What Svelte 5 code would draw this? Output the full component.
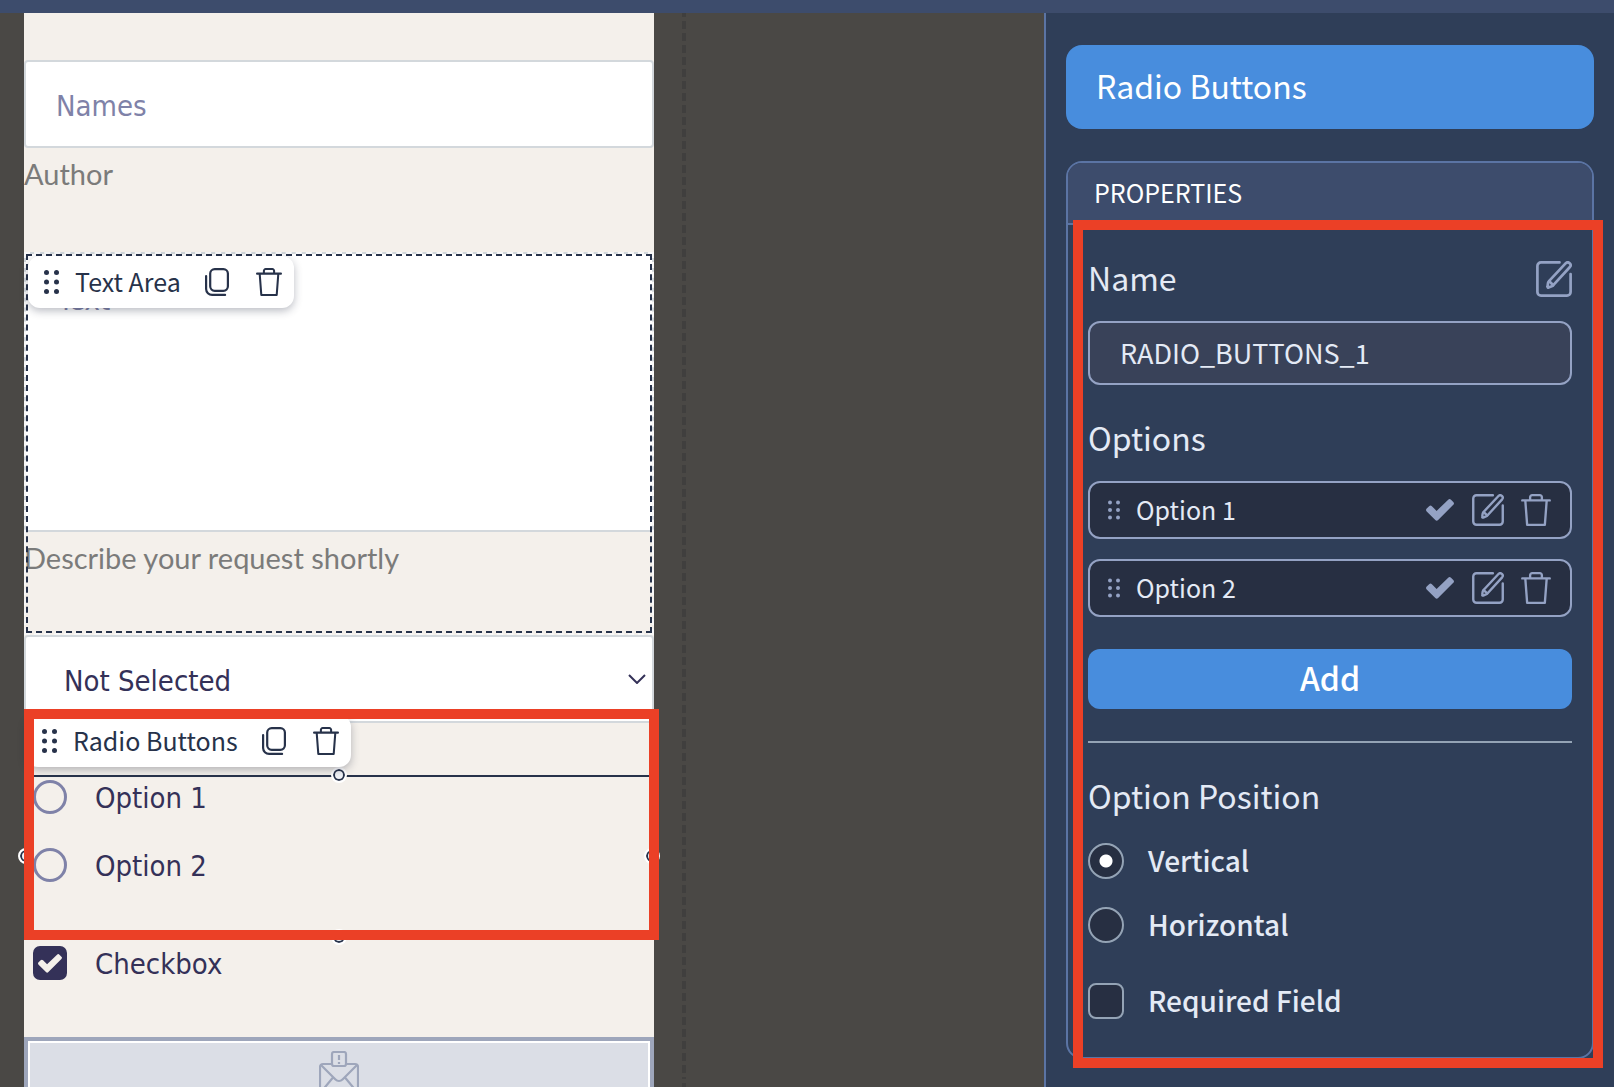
<script>
  let fieldName = $state("RADIO_BUTTONS_1");
  let options = $state([
    { id: 1, label: "Option 1" },
    { id: 2, label: "Option 2" },
  ]);
  let position = $state("vertical");
  let required = $state(false);
  let picked = $state(null);
  let checked = $state(true);

  function addOption() {
    const id = options.length ? options[options.length - 1].id + 1 : 1;
    options.push({ id, label: `Option ${id}` });
  }

  function removeOption(id) {
    options = options.filter((option) => option.id !== id);
  }
</script>

{#snippet dots(size)}
  <svg class="dots {size}" viewBox="0 0 15 24" fill="currentColor" aria-hidden="true">
    {#each [2.5, 12, 21.5] as cy}
      <circle cx="2.5" {cy} r="2.5" />
      <circle cx="12.5" {cy} r="2.5" />
    {/each}
  </svg>
{/snippet}

{#snippet copyIcon()}
  <svg class="icon-copy" viewBox="0 0 24 28" fill="none" stroke="currentColor" stroke-width="2.2" stroke-linecap="round" aria-hidden="true">
    <rect x="5.200" y="1.100" width="17.700" height="21.700" rx="4.500" />
    <path d="M1.100 8v13a6 6 0 0 0 6 5.900h13" />
  </svg>
{/snippet}

{#snippet trashIcon(size)}
  <svg class="trash {size}" viewBox="0 0 28 30" fill="none" stroke="currentColor" stroke-width="2.2" stroke-linecap="round" stroke-linejoin="round" aria-hidden="true">
    <path d="M1.100 6h25.800M8.500 5.500V3a1.900 1.900 0 0 1 1.900-1.900h7.200A1.900 1.900 0 0 1 19.500 3v2.500M4 6.500l1.700 22.400h16.600L24 6.500" />
  </svg>
{/snippet}

{#snippet editIcon(size)}
  <svg class="edit {size}" viewBox="0 0 36 36" fill="none" stroke="currentColor" stroke-width="2.7" stroke-linecap="round" stroke-linejoin="round" aria-hidden="true">
    <path d="M23.500 1.400H5A3.600 3.600 0 0 0 1.400 5v26A3.600 3.600 0 0 0 5 34.600h26a3.600 3.600 0 0 0 3.600-3.600V13" />
    <path d="M13 20.200 29.800 2.200a2.800 2.800 0 0 1 4.100 3.800L17.300 24.200a5 5 0 0 1-1.600 1.100l-3.100 1.200a.8.8 0 0 1-1.100-.9l.5-3.500a4 4 0 0 1 1-1.900Z" />
    <path d="m13.200 20.300 3.900 3.700" />
  </svg>
{/snippet}

{#snippet checkIcon(size)}
  <svg class="check {size}" viewBox="0 0 28 22" fill="currentColor" aria-hidden="true">
    <path d="M.7 9.600 3.100 7.200a2 2 0 0 1 2.800 0l4.700 4.700L22.200.7a2 2 0 0 1 2.800 0l2.300 2.300a2 2 0 0 1 0 2.800L12.100 21a2 2 0 0 1-2.800 0L.7 12.400a2 2 0 0 1 0-2.800Z" />
  </svg>
{/snippet}

<div class="app">
  <header class="topbar"></header>

  <div class="workspace">
    <main class="canvas">
      <form class="sheet" onsubmit={(e) => e.preventDefault()}>
        <div class="field names">
          <input class="text-input" type="text" placeholder="Names" aria-label="Names" />
          <p class="hint">Author</p>
        </div>

        <div class="field area">
          <textarea placeholder="Text" aria-label="Text"></textarea>
          <p class="hint">Describe your request shortly</p>
          <div class="hover-frame"></div>
          <div class="toolbar">
            {@render dots("large")}
            <span>Text Area</span>
            <button type="button" aria-label="Duplicate">{@render copyIcon()}</button>
            <button type="button" aria-label="Delete">{@render trashIcon("small")}</button>
          </div>
        </div>

        <div class="select-wrap">
          <select aria-label="Selection">
            <option>Not Selected</option>
          </select>
          <svg class="chevron" viewBox="0 0 18 10" fill="none" stroke="currentColor" stroke-width="2" aria-hidden="true">
            <path d="m1 1 8 8 8-8" />
          </svg>
        </div>

        <div class="selected-block">
          {#each options as option (option.id)}
            <label class="choice">
              <input type="radio" name="preview" value={option.id} bind:group={picked} />
              <span>{option.label}</span>
            </label>
          {/each}
          <i class="handle top"></i>
          <i class="handle right"></i>
          <i class="handle bottom"></i>
          <i class="handle left"></i>
          <div class="toolbar">
            {@render dots("large")}
            <span>Radio Buttons</span>
            <button type="button" aria-label="Duplicate">{@render copyIcon()}</button>
            <button type="button" aria-label="Delete">{@render trashIcon("small")}</button>
          </div>
          <div class="callout"></div>
        </div>

        <label class="choice tick">
          <input type="checkbox" bind:checked />
          {@render checkIcon("tiny")}
          <span>Checkbox</span>
        </label>

        <button class="submit" type="submit" aria-label="Send">
          <svg viewBox="0 0 40 44" fill="none" stroke="currentColor" stroke-width="2.2" stroke-linejoin="round" aria-hidden="true">
            <path d="M12 13H4a3 3 0 0 0-3 3v24a3 3 0 0 0 3 3h32a3 3 0 0 0 3-3V16a3 3 0 0 0-3-3h-8" />
            <path d="m2 14 14.500 14.500a5 5 0 0 0 7 0L38 14M2 41l12-14.500M38 41 26 26.500" />
            <rect x="13" y="1" width="14" height="14" rx="2" />
            <path d="M20 4v5M20 11v2" />
          </svg>
        </button>
      </form>
      <div class="guide"></div>
    </main>

    <aside class="sidebar">
      <h1>Radio Buttons</h1>

      <section class="card">
        <h2>PROPERTIES</h2>
        <div class="card-body">
          <div class="name-row">
            <label for="field-name">Name</label>
            <button type="button" aria-label="Edit name">{@render editIcon("large")}</button>
          </div>
          <input id="field-name" class="name-input" type="text" bind:value={fieldName} />

          <h3>Options</h3>
          <ul>
            {#each options as option (option.id)}
              <li>
                {@render dots("small")}
                <span>{option.label}</span>
                <button type="button" aria-label="Set as default">{@render checkIcon("regular")}</button>
                <button type="button" aria-label="Edit option">{@render editIcon("small")}</button>
                <button type="button" aria-label="Delete option" onclick={() => removeOption(option.id)}>
                  {@render trashIcon("large")}
                </button>
              </li>
            {/each}
          </ul>
          <button class="add" type="button" onclick={addOption}>Add</button>

          <hr />

          <h3>Option Position</h3>
          <label class="setting">
            <input type="radio" name="position" value="vertical" bind:group={position} />
            <span>Vertical</span>
          </label>
          <label class="setting">
            <input type="radio" name="position" value="horizontal" bind:group={position} />
            <span>Horizontal</span>
          </label>
          <label class="setting required">
            <input type="checkbox" bind:checked={required} />
            <span>Required Field</span>
          </label>
        </div>
        <div class="callout"></div>
      </section>
    </aside>
  </div>
</div>

<style>
  :global(body) {
    margin: 0;
  }

  .app {
    --ui: "Noto Sans CJK SC", "Noto Sans", sans-serif;
    --form: "DejaVu Sans Condensed", "Noto Sans", sans-serif;
    --hint: Lato, sans-serif;
    --steel: #94a2c4;
    --ink: #343158;
    --navy: #27324a;
    --edge: #d3d8dc;
    --blue: #488ddd;
    display: flex;
    flex-direction: column;
    height: 100vh;
    overflow: hidden;
    font-family: var(--ui);
  }

  .app * {
    box-sizing: border-box;
  }

  svg {
    display: block;
  }

  button {
    padding: 0;
    border: 0;
    background: none;
    color: inherit;
    font: inherit;
    cursor: pointer;
  }

  h1,
  h2,
  h3,
  p,
  ul {
    margin: 0;
    padding: 0;
    font-weight: 400;
  }

  .topbar {
    flex: none;
    height: 13px;
    background: #3d4c6c;
  }

  .workspace {
    display: flex;
    flex: 1;
    min-height: 0;
  }

  .canvas {
    display: flex;
    flex: 1;
    gap: 28px;
    padding-left: 24px;
    background: #4a4845;
  }

  .sheet {
    flex: 0 1 630px;
    padding-top: 47px;
    background: #f4f0eb;
    color: var(--ink);
    font-family: var(--form);
    font-size: 29px;
  }

  .guide {
    width: 4px;
    background: repeating-linear-gradient(transparent 0 4px, #403f3e 4px 12px);
    background-position-y: -8px;
  }

  .field {
    position: relative;
  }

  .names {
    height: 192px;
  }

  .area {
    height: 383px;
  }

  .text-input,
  textarea,
  select {
    display: block;
    width: 100%;
    height: 88px;
    margin: 0;
    border: 2px solid var(--edge);
    border-radius: 4px;
    background: #fff;
    color: var(--ink);
    font: inherit;
  }

  .text-input {
    padding: 4px 30px 0;
  }

  textarea {
    height: 280px;
    padding: 29px 32px 0;
    resize: none;
  }

  ::placeholder {
    color: #7f82a8;
    opacity: 1;
  }

  .hint {
    padding-top: 8px;
    color: #7b7b7a;
    font-family: var(--hint);
    font-size: 29px;
    line-height: 36px;
  }

  .hover-frame {
    position: absolute;
    inset: 2px;
    border: 2px dashed var(--navy);
    outline: 2px dashed #f8f8f8;
    pointer-events: none;
  }

  .toolbar {
    position: absolute;
    top: 4px;
    left: 4px;
    display: flex;
    align-items: center;
    height: 52px;
    padding: 0 12px 0 16px;
    border-radius: 12px;
    background: #fff;
    box-shadow: 0 3px 8px rgb(30 35 60 / 30%);
    color: var(--navy);
    font-family: var(--ui);
    font-size: 25px;
    line-height: 36px;
    white-space: nowrap;
  }

  .toolbar span {
    margin: 0 24px 0 16px;
    padding-bottom: 2px;
  }

  .toolbar button + button {
    margin-left: 27px;
  }

  .dots.large {
    width: 15px;
    height: 24px;
  }

  .dots.small {
    width: 12px;
    height: 20px;
  }

  .icon-copy {
    width: 24px;
    height: 28px;
  }

  .trash.small {
    width: 26px;
    height: 28px;
  }

  .trash.large {
    width: 30px;
    height: 32px;
  }

  .edit.small {
    width: 32px;
    height: 32px;
  }

  .edit.large {
    width: 36px;
    height: 36px;
  }

  .check.regular {
    width: 28px;
    height: 22px;
  }

  .select-wrap {
    position: relative;
  }

  select {
    padding: 4px 36px 0 38px;
    appearance: none;
  }

  .chevron {
    position: absolute;
    top: 39px;
    right: 8px;
    width: 18px;
    height: 10px;
    pointer-events: none;
  }

  .selected-block {
    position: relative;
    display: flex;
    flex-direction: column;
    gap: 34px;
    height: 162px;
    margin: 52px 1px 9px;
    padding: 3px 6px;
    border: 2px solid var(--navy);
  }

  .selected-block .toolbar {
    top: -62px;
    left: -1px;
  }

  .handle {
    position: absolute;
    width: 16px;
    height: 16px;
    border: 2px solid #fff;
    border-radius: 50%;
    background: #f1f3f7;
    box-shadow: inset 0 0 0 2px var(--navy);
  }

  .handle.top {
    top: -10px;
    left: calc(50% - 8px);
  }

  .handle.right {
    top: calc(50% - 8px);
    right: -9px;
  }

  .handle.bottom {
    bottom: -10px;
    left: calc(50% - 8px);
  }

  .handle.left {
    top: calc(50% - 8px);
    left: -9px;
  }

  .callout {
    position: absolute;
    border: 10px solid #eb4026;
    pointer-events: none;
  }

  .selected-block .callout {
    inset: -68px -8px -5px -3px;
  }

  .choice {
    display: flex;
    align-items: center;
    gap: 28px;
    height: 34px;
    line-height: 34px;
  }

  .choice span {
    padding-top: 2px;
  }

  .choice input {
    flex: none;
    width: 34px;
    height: 34px;
    margin: 0;
    border: 3px solid #7f82a8;
    border-radius: 50%;
    appearance: none;
  }

  .choice input[type="radio"]:checked {
    background: radial-gradient(circle, var(--ink) 8px, transparent 9px);
  }

  .tick {
    position: relative;
    margin: 0 9px;
  }

  .choice input[type="checkbox"] {
    border-radius: 7px;
  }

  .choice input[type="checkbox"]:checked {
    border-color: var(--ink);
    background: var(--ink);
  }

  .check.tiny {
    position: absolute;
    top: 8px;
    left: 5px;
    width: 24px;
    height: 19px;
    color: #f4f0eb;
    pointer-events: none;
  }

  .choice input:not(:checked) + .check {
    visibility: hidden;
  }

  .submit {
    display: flex;
    justify-content: center;
    width: 100%;
    height: 88px;
    margin-top: 57px;
    padding-top: 10px;
    border: 4px solid #9ea6bb;
    background: #dbdee6;
    box-shadow: inset 0 0 0 2px #fff;
    color: #9ea6bb;
  }

  .submit svg {
    width: 40px;
    height: 44px;
  }

  .sidebar {
    flex: none;
    width: 570px;
    padding: 32px 20px;
    border-left: 2px solid #5b74a4;
    background: #2f3e58;
    color: #e4eaf5;
    font-size: 32px;
    line-height: 36px;
  }

  h1 {
    padding: 22px 30px 26px;
    border-radius: 16px;
    background: var(--blue);
    color: #fff;
    font-size: 32px;
    line-height: 36px;
  }

  .card {
    position: relative;
    margin-top: 32px;
    border: 2px solid #5b74a4;
    border-radius: 16px;
  }

  .card > .callout {
    inset: 57px -11px -11px 5px;
  }

  h2 {
    padding: 11px 26px 13px;
    border-bottom: 2px solid #5b74a4;
    border-radius: 14px 14px 0 0;
    background: #3d4c6c;
    color: #fff;
    font-size: 25px;
    line-height: 36px;
  }

  .card-body {
    padding: 36px 20px 38px;
  }

  .name-row {
    display: flex;
    justify-content: space-between;
    height: 36px;
    line-height: 32px;
  }

  .name-row button {
    color: var(--steel);
  }

  .name-input {
    display: block;
    width: 100%;
    height: 64px;
    margin: 24px 0 36px;
    padding: 0 30px 2px;
    border: 2px solid var(--steel);
    border-radius: 12px;
    background: #394259;
    color: #e4eaf5;
    font-family: inherit;
    font-size: 27px;
  }

  h3 {
    padding-bottom: 4px;
    font-size: 32px;
    line-height: 32px;
  }

  ul {
    display: grid;
    gap: 20px;
    margin: 24px 0 32px;
    list-style: none;
  }

  li {
    display: flex;
    align-items: center;
    height: 58px;
    padding: 0 19px 0 18px;
    border: 2px solid var(--steel);
    border-radius: 12px;
    background: #272f42;
    color: var(--steel);
    font-size: 25px;
  }

  li span {
    flex: 1;
    margin-left: 16px;
    padding-bottom: 2px;
    color: #e4eaf5;
  }

  li button {
    margin-left: 18px;
  }

  li button:last-child {
    margin-left: 17px;
  }

  .add {
    width: 100%;
    height: 60px;
    padding-bottom: 4px;
    border-radius: 12px;
    background: var(--blue);
    color: #fff;
    font-weight: 500;
  }

  hr {
    height: 2px;
    margin: 32px 0 36px;
    border: 0;
    background: #94a3b5;
  }

  .setting {
    display: flex;
    align-items: center;
    gap: 24px;
    height: 36px;
    margin-top: 28px;
    font-size: 28px;
    font-weight: 500;
  }

  .setting.required {
    margin-top: 40px;
  }

  .setting span {
    padding-bottom: 2px;
  }

  .setting input {
    width: 36px;
    height: 36px;
    margin: 0;
    border: 2px solid #94a3b5;
    border-radius: 50%;
    background: #272f42;
    appearance: none;
  }

  .setting input[type="checkbox"] {
    border-radius: 8px;
  }

  .setting input[type="checkbox"]:checked {
    background: var(--blue);
  }

  .setting input[type="radio"]:checked {
    background: radial-gradient(circle, #fff 6px, #272f42 7px);
  }
</style>
